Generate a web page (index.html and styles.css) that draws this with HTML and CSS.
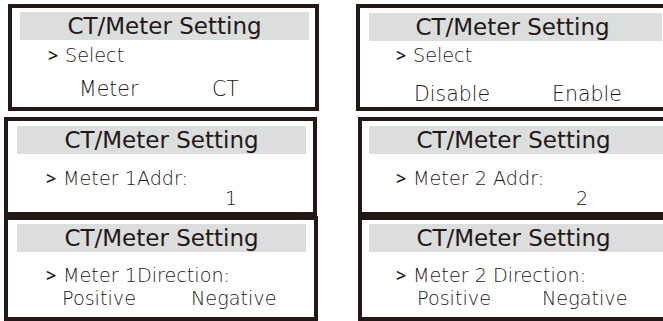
FILE: index.html
```html
<!DOCTYPE html>
<html lang="en">
<head>
  <meta charset="UTF-8">
  <meta name="viewport" content="width=device-width, initial-scale=1.0">
  <title>CT/Meter Setting</title>
  <link rel="stylesheet" href="styles.css">
</head>
<body>
  <main class="sheet">
    <div class="column column-left">
      <section class="screen screen-select screen-meter-ct">
        <h2 class="title">CT/Meter Setting</h2>
        <div class="prompt"><span class="caret">&gt;</span>Select</div>
        <div class="options">
          <span>Meter</span>
          <span>CT</span>
        </div>
      </section>

      <section class="screen screen-addr screen-addr-1">
        <h2 class="title">CT/Meter Setting</h2>
        <div class="prompt"><span class="caret">&gt;</span>Meter 1Addr:</div>
        <div class="value">1</div>
      </section>

      <section class="screen screen-dir screen-dir-1">
        <h2 class="title">CT/Meter Setting</h2>
        <div class="prompt"><span class="caret">&gt;</span>Meter 1Direction:</div>
        <div class="options">
          <span>Positive</span>
          <span>Negative</span>
        </div>
      </section>
    </div>

    <div class="column column-right">
      <section class="screen screen-select screen-enable">
        <h2 class="title">CT/Meter Setting</h2>
        <div class="prompt"><span class="caret">&gt;</span>Select</div>
        <div class="options">
          <span>Disable</span>
          <span>Enable</span>
        </div>
      </section>

      <section class="screen screen-addr screen-addr-2">
        <h2 class="title">CT/Meter Setting</h2>
        <div class="prompt"><span class="caret">&gt;</span>Meter 2 Addr:</div>
        <div class="value">2</div>
      </section>

      <section class="screen screen-dir screen-dir-2">
        <h2 class="title">CT/Meter Setting</h2>
        <div class="prompt"><span class="caret">&gt;</span>Meter 2 Direction:</div>
        <div class="options">
          <span>Positive</span>
          <span>Negative</span>
        </div>
      </section>
    </div>
  </main>
</body>
</html>
```

FILE: styles.css
```css
html, body {
  margin: 0;
  background: #ffffff;
  overflow: hidden;
}
body {
  font-family: "DejaVu Sans", "Open Sans", sans-serif;
  color: #231815;
  width: 663px;
  height: 321px;
}
.sheet {
  display: flex;
  align-items: flex-start;
}
.column {
  display: flex;
  flex-direction: column;
  flex: none;
}
.column-left {
  width: 319px;
  padding: 4px 0 0 4px;
  box-sizing: border-box;
}
.column-right {
  width: 312px;
  margin-left: 37px;
  padding-top: 4px;
}

/* one LCD screen */
.screen {
  border: 4px solid #231815;
  box-sizing: border-box;
  display: flex;
  flex-direction: column;
  font-weight: 200;
  font-size: 19.2px;
}
.title {
  margin: 0;
  height: 28px;
  line-height: 28px;
  background: #dcdddd;
  font-size: 23px;
  font-weight: 400;
  text-align: center;
}
.prompt, .options, .value {
  white-space: nowrap;
}
.caret {
  display: inline-block;
  width: 17px;
  font-family: "Open Sans", sans-serif;
  font-weight: 600;
  font-size: 18px;
}

/* select screens */
.screen-select {
  height: 107px;
  margin-bottom: 6px;
}
.screen-select .title {
  margin: 4px 6px 0 8px;
}
.screen-select .prompt {
  margin-top: 3px;
  line-height: 24px;
  padding-left: 36px;
}
.screen-select .options {
  margin-top: 9px;
  line-height: 24px;
  display: flex;
  font-size: 20.5px;
}
.screen-meter-ct {
  width: 311px;
  margin-left: 4px;
}
.screen-meter-ct .options {
  padding-left: 67px;
}
.screen-meter-ct .options span:first-child {
  width: 133px;
}
.screen-enable {
  width: 312px;
}
.screen-enable .title {
  margin: 5px 2px 0 9px;
  padding-right: 6px;
}
.screen-enable .prompt {
  margin-top: 2px;
}
.screen-enable .options {
  margin-top: 14px;
  padding-left: 54px;
}
.screen-enable .options span:first-child {
  width: 138px;
}

/* address screens */
.screen-addr {
  height: 99px;
}
.screen-addr .title {
  margin: 5px 7px 0 9px;
}
.screen-addr .prompt,
.screen-addr .value {
  line-height: 20px;
}
.screen-addr .prompt {
  margin-top: 14px;
}
.screen-addr-1 {
  width: 313px;
}
.screen-addr-1 .prompt {
  padding-left: 38px;
}
.screen-addr-1 .value {
  padding-left: 217px;
}
.screen-addr-2 {
  width: 310px;
  margin-left: 2px;
}
.screen-addr-2 .title {
  margin-left: 7px;
  margin-right: 0;
  padding-right: 6px;
}
.screen-addr-2 .prompt {
  padding-left: 34px;
}
.screen-addr-2 .value {
  padding-left: 214px;
}

/* direction screens */
.screen-dir {
  height: 105px;
}
.screen-dir .title {
  margin: 4px 8px 0 9px;
}
.screen-dir .prompt,
.screen-dir .options {
  line-height: 23px;
}
.screen-dir .prompt {
  margin-top: 12px;
  padding-left: 38px;
}
.screen-dir .options {
  display: flex;
  padding-left: 54px;
}
.screen-dir-1 {
  width: 314px;
}
.screen-dir-1 .options span:first-child {
  width: 129px;
}
.screen-dir-2 {
  width: 310px;
  margin-left: 2px;
}
.screen-dir-2 .title {
  margin-left: 7px;
  margin-right: 0;
  padding-right: 6px;
}
.screen-dir-2 .prompt {
  padding-left: 34px;
}
.screen-dir-2 .options {
  padding-left: 55px;
}
.screen-dir-2 .options span:first-child {
  width: 125px;
}
```
